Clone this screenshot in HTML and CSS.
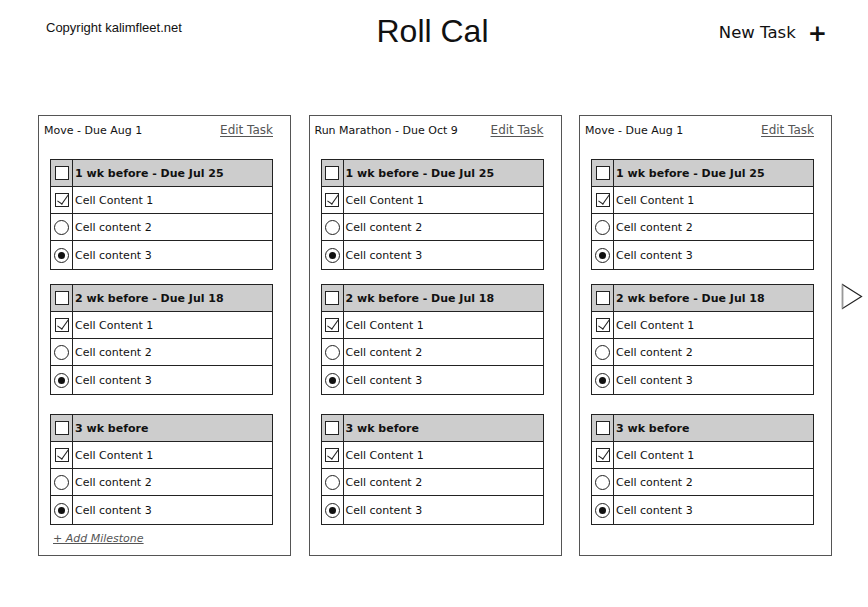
FILE: index.html
```html
<!DOCTYPE html>
<html>
<head>
<meta charset="utf-8">
<link rel="stylesheet" href="styles.css">
</head>
<body>
<header class="top">
  <div class="copy">Copyright kalimfleet.net</div>
  <h1 class="title">Roll Cal</h1>
  <div class="new-task">New Task <span class="plus">+</span></div>
</header>

<main class="board">
  <section class="task">
    <div class="task-head"><span class="task-name">Move - Due Aug 1</span><a class="edit">Edit Task</a></div>
    <div class="ms">
      <div class="row hdr"><div class="c1"><span class="box"></span></div><div class="c2">1 wk before - Due Jul 25</div></div>
      <div class="row"><div class="c1"><span class="box chk"></span></div><div class="c2">Cell Content 1</div></div>
      <div class="row"><div class="c1"><span class="radio"></span></div><div class="c2">Cell content 2</div></div>
      <div class="row"><div class="c1"><span class="radio on"></span></div><div class="c2">Cell content 3</div></div>
    </div>
    <div class="ms">
      <div class="row hdr"><div class="c1"><span class="box"></span></div><div class="c2">2 wk before - Due Jul 18</div></div>
      <div class="row"><div class="c1"><span class="box chk"></span></div><div class="c2">Cell Content 1</div></div>
      <div class="row"><div class="c1"><span class="radio"></span></div><div class="c2">Cell content 2</div></div>
      <div class="row"><div class="c1"><span class="radio on"></span></div><div class="c2">Cell content 3</div></div>
    </div>
    <div class="ms">
      <div class="row hdr"><div class="c1"><span class="box"></span></div><div class="c2">3 wk before</div></div>
      <div class="row"><div class="c1"><span class="box chk"></span></div><div class="c2">Cell Content 1</div></div>
      <div class="row"><div class="c1"><span class="radio"></span></div><div class="c2">Cell content 2</div></div>
      <div class="row"><div class="c1"><span class="radio on"></span></div><div class="c2">Cell content 3</div></div>
    </div>
    <a class="add">+ Add Milestone</a>
  </section>

  <section class="task">
    <div class="task-head"><span class="task-name">Run Marathon - Due Oct 9</span><a class="edit">Edit Task</a></div>
    <div class="ms">
      <div class="row hdr"><div class="c1"><span class="box"></span></div><div class="c2">1 wk before - Due Jul 25</div></div>
      <div class="row"><div class="c1"><span class="box chk"></span></div><div class="c2">Cell Content 1</div></div>
      <div class="row"><div class="c1"><span class="radio"></span></div><div class="c2">Cell content 2</div></div>
      <div class="row"><div class="c1"><span class="radio on"></span></div><div class="c2">Cell content 3</div></div>
    </div>
    <div class="ms">
      <div class="row hdr"><div class="c1"><span class="box"></span></div><div class="c2">2 wk before - Due Jul 18</div></div>
      <div class="row"><div class="c1"><span class="box chk"></span></div><div class="c2">Cell Content 1</div></div>
      <div class="row"><div class="c1"><span class="radio"></span></div><div class="c2">Cell content 2</div></div>
      <div class="row"><div class="c1"><span class="radio on"></span></div><div class="c2">Cell content 3</div></div>
    </div>
    <div class="ms">
      <div class="row hdr"><div class="c1"><span class="box"></span></div><div class="c2">3 wk before</div></div>
      <div class="row"><div class="c1"><span class="box chk"></span></div><div class="c2">Cell Content 1</div></div>
      <div class="row"><div class="c1"><span class="radio"></span></div><div class="c2">Cell content 2</div></div>
      <div class="row"><div class="c1"><span class="radio on"></span></div><div class="c2">Cell content 3</div></div>
    </div>
  </section>

  <section class="task">
    <div class="task-head"><span class="task-name">Move - Due Aug 1</span><a class="edit">Edit Task</a></div>
    <div class="ms">
      <div class="row hdr"><div class="c1"><span class="box"></span></div><div class="c2">1 wk before - Due Jul 25</div></div>
      <div class="row"><div class="c1"><span class="box chk"></span></div><div class="c2">Cell Content 1</div></div>
      <div class="row"><div class="c1"><span class="radio"></span></div><div class="c2">Cell content 2</div></div>
      <div class="row"><div class="c1"><span class="radio on"></span></div><div class="c2">Cell content 3</div></div>
    </div>
    <div class="ms">
      <div class="row hdr"><div class="c1"><span class="box"></span></div><div class="c2">2 wk before - Due Jul 18</div></div>
      <div class="row"><div class="c1"><span class="box chk"></span></div><div class="c2">Cell Content 1</div></div>
      <div class="row"><div class="c1"><span class="radio"></span></div><div class="c2">Cell content 2</div></div>
      <div class="row"><div class="c1"><span class="radio on"></span></div><div class="c2">Cell content 3</div></div>
    </div>
    <div class="ms">
      <div class="row hdr"><div class="c1"><span class="box"></span></div><div class="c2">3 wk before</div></div>
      <div class="row"><div class="c1"><span class="box chk"></span></div><div class="c2">Cell Content 1</div></div>
      <div class="row"><div class="c1"><span class="radio"></span></div><div class="c2">Cell content 2</div></div>
      <div class="row"><div class="c1"><span class="radio on"></span></div><div class="c2">Cell content 3</div></div>
    </div>
  </section>

  <div class="next">
    <svg width="22" height="28" viewBox="0 0 22 28"><polygon points="1.5,1.5 20.5,13.5 1.5,25.5" fill="#fff" stroke="#222" stroke-width="1.2"/><line x1="1.5" y1="1.5" x2="1.5" y2="25.5" stroke="#999" stroke-width="1.5"/></svg>
  </div>
</main>
</body>
</html>
```

FILE: styles.css
```css
* { box-sizing: border-box; }
body {
  margin: 0;
  width: 868px;
  height: 607px;
  background: #fff;
  color: #111;
  font-family: "DejaVu Sans", sans-serif;
  overflow: hidden;
}
.top {
  display: grid;
  grid-template-columns: 1fr auto 1fr;
  align-items: start;
  height: 115px;
  padding: 0 41px 0 46px;
}
.copy {
  font-family: "Liberation Sans", Arial, sans-serif;
  font-size: 13px;
  margin-top: 20px;
}
.title {
  margin: 13px 8px 0 0;
  font-family: "Liberation Sans", Arial, sans-serif;
  font-weight: normal;
  font-size: 32px;
  line-height: 36px;
}
.new-task {
  justify-self: end;
  margin-top: 22px;
  font-size: 16.5px;
  line-height: 22px;
  display: flex;
  align-items: center;
  gap: 12px;
}
.plus {
  font-size: 23px;
  font-weight: bold;
  line-height: 22px;
}
.board {
  display: flex;
  align-items: flex-start;
  padding-left: 38px;
  gap: 17.5px;
}
.task {
  width: 253px;
  height: 441px;
  border: 1.5px solid #555;
  padding: 6px 17px 0 11px;
  display: flex;
  flex-direction: column;
}
.task-head {
  display: flex;
  justify-content: space-between;
  align-items: baseline;
  margin-left: -6px;
  height: 32px;
  font-size: 11px;
  line-height: 16px;
}
.edit {
  color: #555;
  text-decoration: underline;
  text-underline-offset: 2px;
  font-size: 12px;
}
.ms {
  border: 1px solid #222;
  margin-top: 0;
  margin-bottom: 14px;
}
.task-head + .ms { margin-top: 5px; }
.ms:nth-of-type(4) { margin-top: 5px; margin-bottom: 7px; }
.row {
  display: flex;
  height: 27px;
  border-bottom: 1px solid #222;
}
.row:last-child { border-bottom: none; height: 28px; }
.row.hdr {
  background: #cdcdcd;
  border-bottom: 1.5px solid #222;
  font-weight: bold;
}
.c1 {
  width: 22px;
  border-right: 1px solid #222;
  display: flex;
  align-items: center;
  justify-content: center;
}
.c2 {
  flex: 1;
  display: flex;
  align-items: center;
  padding-left: 2px;
  font-size: 11px;
  white-space: nowrap;
}
.box {
  width: 14px;
  height: 14px;
  border: 1px solid #222;
  background: #fff;
  position: relative;
}
.box.chk::after {
  content: "";
  position: absolute;
  left: 4px;
  top: -2px;
  width: 5px;
  height: 11px;
  border-right: 1.5px solid #222;
  border-bottom: 1.5px solid #222;
  transform: rotate(35deg);
}
.radio {
  width: 15px;
  height: 15px;
  border: 1px solid #222;
  border-radius: 50%;
  background: #fff;
  display: flex;
  align-items: center;
  justify-content: center;
}
.radio.on::after {
  content: "";
  width: 7px;
  height: 7px;
  border-radius: 50%;
  background: #111;
}
.add {
  margin-left: 3px;
  font-size: 11px;
  color: #555;
  text-decoration: underline;
  font-style: italic;
}
.next {
  align-self: flex-start;
  margin-top: 168px;
  margin-left: -9px;
}
```
